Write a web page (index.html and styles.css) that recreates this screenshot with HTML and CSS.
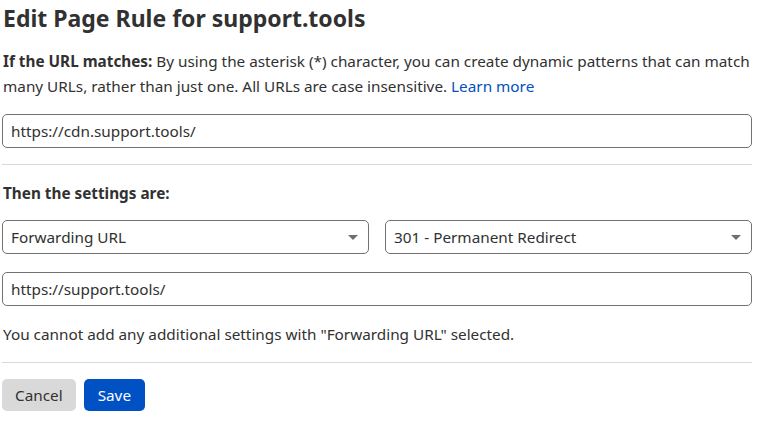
FILE: index.html
```html
<!DOCTYPE html>
<html lang="en">
<head>
<meta charset="utf-8">
<title>Edit Page Rule</title>
<link rel="stylesheet" href="styles.css">
</head>
<body>
<div class="page">
  <h1 class="title">Edit Page Rule for support.tools</h1>
  <p class="intro"><strong>If the URL matches:</strong> By using the asterisk (*) character, you can create dynamic patterns that can match many URLs, rather than just one. All URLs are case insensitive. <a class="link" href="#">Learn more</a></p>
  <div class="field field-first">https://cdn.support.tools/</div>
  <hr class="rule rule-first">
  <h2 class="subtitle">Then the settings are:</h2>
  <div class="selects">
    <div class="field select"><span>Forwarding URL</span><span class="caret"></span></div>
    <div class="field select"><span>301 - Permanent Redirect</span><span class="caret"></span></div>
  </div>
  <div class="field field-second">https://support.tools/</div>
  <p class="note">You cannot add any additional settings with "Forwarding URL" selected.</p>
  <hr class="rule rule-second">
  <div class="actions">
    <button class="btn btn-cancel">Cancel</button>
    <button class="btn btn-save">Save</button>
  </div>
</div>
</body>
</html>
```
FILE: styles.css
```css
* { box-sizing: border-box; }
html, body { margin: 0; padding: 0; background: #ffffff; }
body {
  font-family: "Noto Sans", "Open Sans", sans-serif;
  color: #313131;
  font-size: 15.3px;
}
.page {
  width: 752px;
  padding: 0 0 0 2px;
}
.title {
  margin: 0;
  padding-left: 1px;
  font-size: 23px;
  line-height: 36px;
  font-weight: 700;
}
.intro {
  margin: 13px 0 0 0;
  padding-left: 1px;
  line-height: 25px;
  font-size: 15.3px;
}
.intro strong { font-weight: 700; }
.link { color: #0051c3; text-decoration: none; }
.field {
  height: 34px;
  border: 1px solid #727272;
  border-radius: 5px;
  padding: 0 8px;
  display: flex;
  align-items: center;
  font-size: 15.3px;
}
.field-first { margin-top: 15px; }
.rule {
  border: 0;
  border-top: 1px solid #d9d9d9;
  margin: 0;
}
.rule-first { margin-top: 16px; }
.subtitle {
  margin: 16px 0 0 0;
  padding-left: 1px;
  font-size: 15.3px;
  line-height: 24px;
  font-weight: 700;
}
.selects {
  margin-top: 15px;
  display: grid;
  grid-template-columns: 1fr 1fr;
  gap: 16px;
}
.select { justify-content: space-between; padding-right: 10px; }
.caret {
  width: 0; height: 0;
  border-left: 5px solid transparent;
  border-right: 5px solid transparent;
  border-top: 5px solid #6f6f6f;
}
.field-second { margin-top: 18px; }
.note {
  margin: 16px 0 0 0;
  padding-left: 1px;
  line-height: 25px;
}
.rule-second { margin-top: 15px; }
.actions {
  margin-top: 16px;
  display: flex;
  gap: 8px;
}
.btn {
  font-family: inherit;
  font-size: 15.3px;
  height: 32px;
  border: 0;
  border-radius: 5px;
  padding: 0 13px;
}
.btn-cancel { background: #d9d9d9; color: #313131; }
.btn-save { background: #0051c3; color: #ffffff; padding: 0 14px; }
```
